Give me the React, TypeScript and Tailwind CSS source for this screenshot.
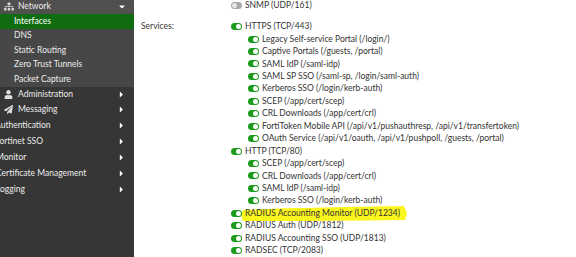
import React from "react";
import { FaSitemap, FaUser, FaPaperPlane, FaCaretRight, FaCaretDown } from "react-icons/fa";

type Row = { label: string; level: number; on: boolean; hl?: boolean };

const rows: Row[] = [
  { label: "HTTPS (TCP/443)", level: 0, on: true },
  { label: "Legacy Self-service Portal (/login/)", level: 1, on: true },
  { label: "Captive Portals (/guests, /portal)", level: 1, on: true },
  { label: "SAML IdP (/saml-idp)", level: 1, on: true },
  { label: "SAML SP SSO (/saml-sp, /login/saml-auth)", level: 1, on: true },
  { label: "Kerberos SSO (/login/kerb-auth)", level: 1, on: true },
  { label: "SCEP (/app/cert/scep)", level: 1, on: true },
  { label: "CRL Downloads (/app/cert/crl)", level: 1, on: true },
  { label: "FortiToken Mobile API (/api/v1/pushauthresp, /api/v1/transfertoken)", level: 1, on: true },
  { label: "OAuth Service (/api/v1/oauth, /api/v1/pushpoll, /guests, /portal)", level: 1, on: true },
  { label: "HTTP (TCP/80)", level: 0, on: true },
  { label: "SCEP (/app/cert/scep)", level: 1, on: true },
  { label: "CRL Downloads (/app/cert/crl)", level: 1, on: true },
  { label: "SAML IdP (/saml-idp)", level: 1, on: true },
  { label: "Kerberos SSO (/login/kerb-auth)", level: 1, on: true },
  { label: "RADIUS Accounting Monitor (UDP/1234)", level: 0, on: true, hl: true },
  { label: "RADIUS Auth (UDP/1812)", level: 0, on: true },
  { label: "RADIUS Accounting SSO (UDP/1813)", level: 0, on: true },
  { label: "RADSEC (TCP/2083)", level: 0, on: true },
];

function Toggle({ on }: { on: boolean }) {
  return on ? (
    <span className="relative inline-block h-[7px] w-[11px] shrink-0 rounded-full bg-[#1c9a1c]">
      <span className="absolute right-[1px] top-[1px] h-[5px] w-[5px] rounded-full bg-white" />
    </span>
  ) : (
    <span className="relative inline-block h-[7px] w-[11px] shrink-0 rounded-full bg-[#a8a8a8]">
      <span className="absolute left-[1px] top-[1px] h-[5px] w-[5px] rounded-full bg-[#e6e6e6]" />
    </span>
  );
}

function SideItem({
  label,
  icon,
  arrow,
  cls,
  textCls,
}: {
  label: string;
  icon?: React.ReactNode;
  arrow?: "right" | "down";
  cls: string;
  textCls: string;
}) {
  return (
    <div className={`flex items-center whitespace-nowrap ${cls}`}>
      {icon ? <span className="flex w-[16px] shrink-0 items-center justify-center pl-[1px]">{icon}</span> : null}
      <span className={`flex-1 ${textCls}`}>{label}</span>
      {arrow === "right" ? (
        <FaCaretRight className="mr-[9px] h-[9px] w-[7px] shrink-0 text-white" />
      ) : arrow === "down" ? (
        <FaCaretDown className="mr-[8px] h-[9px] w-[8px] shrink-0 text-white" />
      ) : null}
    </div>
  );
}

export default function App() {
  const font = { fontFamily: "Lato, 'Open Sans', sans-serif" };
  return (
    <div className="flex h-[257px] w-[576px] overflow-hidden bg-white" style={font}>
      {/* Sidebar */}
      <div className="flex h-full w-[134px] shrink-0 flex-col overflow-hidden bg-[#363636] text-[8.5px] text-[#ececec]">
        <div className="-mt-[1px]">
          <SideItem
            label="Network"
            icon={<FaSitemap className="h-[9px] w-[10px] text-[#d8d8d8]" />}
            arrow="down"
            cls="h-[15px] bg-[#505050]"
            textCls="pl-[2px]"
          />
          <div className="bg-[#474747]">
            <div className="flex h-[14.5px] items-center bg-[#106c10] pl-[14px] text-white">Interfaces</div>
            <div className="flex h-[14.5px] items-center pl-[14px]">DNS</div>
            <div className="flex h-[14.5px] items-center pl-[14px]">Static Routing</div>
            <div className="flex h-[14.5px] items-center pl-[14px]">Zero Trust Tunnels</div>
            <div className="flex h-[14.5px] items-center pl-[14px]">Packet Capture</div>
          </div>
          <SideItem
            label="Administration"
            icon={<FaUser className="h-[9px] w-[9px] text-[#e0e0e0]" />}
            arrow="right"
            cls="h-[15px]"
            textCls="pl-[2px]"
          />
          <SideItem
            label="Messaging"
            icon={<FaPaperPlane className="h-[9px] w-[9px] text-[#e0e0e0]" />}
            arrow="right"
            cls="h-[16px]"
            textCls="pl-[2px]"
          />
          <SideItem label="Authentication" arrow="right" cls="h-[16px]" textCls="-ml-[5px]" />
          <SideItem label="Fortinet SSO" arrow="right" cls="h-[16px]" textCls="-ml-[5px]" />
          <SideItem label="Monitor" arrow="right" cls="h-[16px]" textCls="-ml-[4px]" />
          <SideItem label="Certificate Management" arrow="right" cls="h-[16px]" textCls="-ml-[4px]" />
          <SideItem label="Logging" arrow="right" cls="h-[16px]" textCls="-ml-[4px]" />
        </div>
      </div>

      {/* Content */}
      <div className="flex-1 overflow-hidden text-[8.5px] text-[#333333]">
        <div className="flex h-[12.45px] items-center pl-[97px]">
          <div className="-mt-[1px] flex items-center gap-[3px] whitespace-nowrap">
            <Toggle on={false} />
            <span>SNMP (UDP/161)</span>
          </div>
        </div>
        <div className="flex pt-[8px]">
          <div className="w-[97px] shrink-0 pl-[7px]">
            <div className="flex h-[12.45px] items-center">Services:</div>
          </div>
          <div className="flex flex-col">
            {rows.map((r, i) => (
              <div
                key={i}
                className={`relative flex h-[12.45px] items-center gap-[3px] whitespace-nowrap ${
                  r.level === 1 ? "pl-[17px]" : ""
                }`}
              >
                {r.hl ? (
                  <svg
                    className="pointer-events-none absolute left-[9px] top-[-2px]"
                    width="168"
                    height="18"
                    viewBox="0 0 168 18"
                  >
                    <path
                      d="M3 5 C 40 3, 110 2, 164 1 L 167 8 L 165 15 C 110 16, 50 16, 3 16 L 1 10 Z"
                      fill="#fbf51e"
                    />
                  </svg>
                ) : null}
                <Toggle on={r.on} />
                <span className="relative">{r.label}</span>
              </div>
            ))}
          </div>
        </div>
      </div>
    </div>
  );
}
